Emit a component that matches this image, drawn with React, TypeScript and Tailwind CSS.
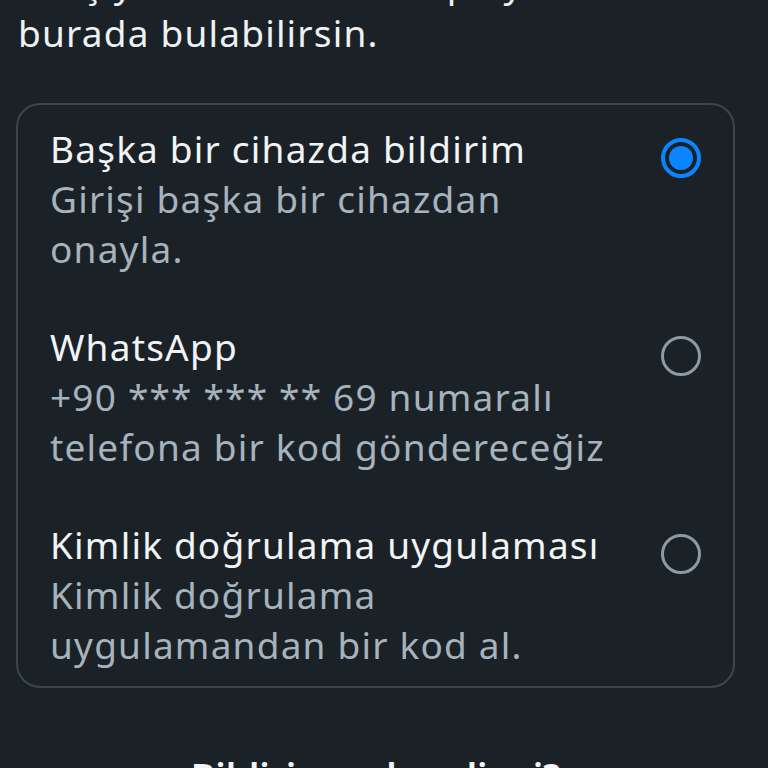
const options = [
  {
    title: "Başka bir cihazda bildirim",
    desc: "Girişi başka bir cihazdan onayla.",
    selected: true,
  },
  {
    title: "WhatsApp",
    desc: "+90 *** *** ** 69 numaralı telefona bir kod göndereceğiz",
    selected: false,
  },
  {
    title: "Kimlik doğrulama uygulaması",
    desc: "Kimlik doğrulama uygulamandan bir kod al.",
    selected: false,
  },
];

function Radio({ selected }: { selected: boolean }) {
  if (selected) {
    return (
      <div className="flex h-[40px] w-[40px] items-center justify-center rounded-full border-[4px] border-[#0a85ff]">
        <div className="h-[24px] w-[24px] rounded-full bg-[#0a85ff]" />
      </div>
    );
  }
  return <div className="h-[40px] w-[40px] rounded-full border-[3px] border-[#8d99a3]" />;
}

export default function App() {
  return (
    <div
      className="h-[768px] w-[768px] overflow-hidden bg-[#1a2228] pl-4 pr-[33px]"
      style={{ fontFamily: "'Noto Sans', Roboto, sans-serif" }}
    >
      <div className="-mt-[42px] pl-[2px] text-[37px] leading-[50px] tracking-[1.2px] text-[#eef1f3]">
        <p>Giriş yöntemlerini hesap ayarlarında</p>
        <p>burada bulabilirsin.</p>
      </div>

      <div className="mt-[45px] flex flex-col gap-[48px] rounded-[24px] border-2 border-[#3b464e] pb-[16px] pl-[32px] pr-[32px] pt-[19px]">
        {options.map((o) => (
          <div key={o.title} className="flex items-start justify-between">
            <div className="w-[572px] text-[37px] leading-[50px] tracking-[1.2px]">
              <p className="text-[#f1f3f5]">{o.title}</p>
              <p className="text-[#a7b3bc]">{o.desc}</p>
            </div>
            <div className="mt-[14px]">
              <Radio selected={o.selected} />
            </div>
          </div>
        ))}
      </div>

      <p className="mt-[64px] text-center text-[37px] font-semibold leading-[50px] text-[#f1f3f5]">
        Bildirim gelmedi mi?
      </p>
    </div>
  );
}
